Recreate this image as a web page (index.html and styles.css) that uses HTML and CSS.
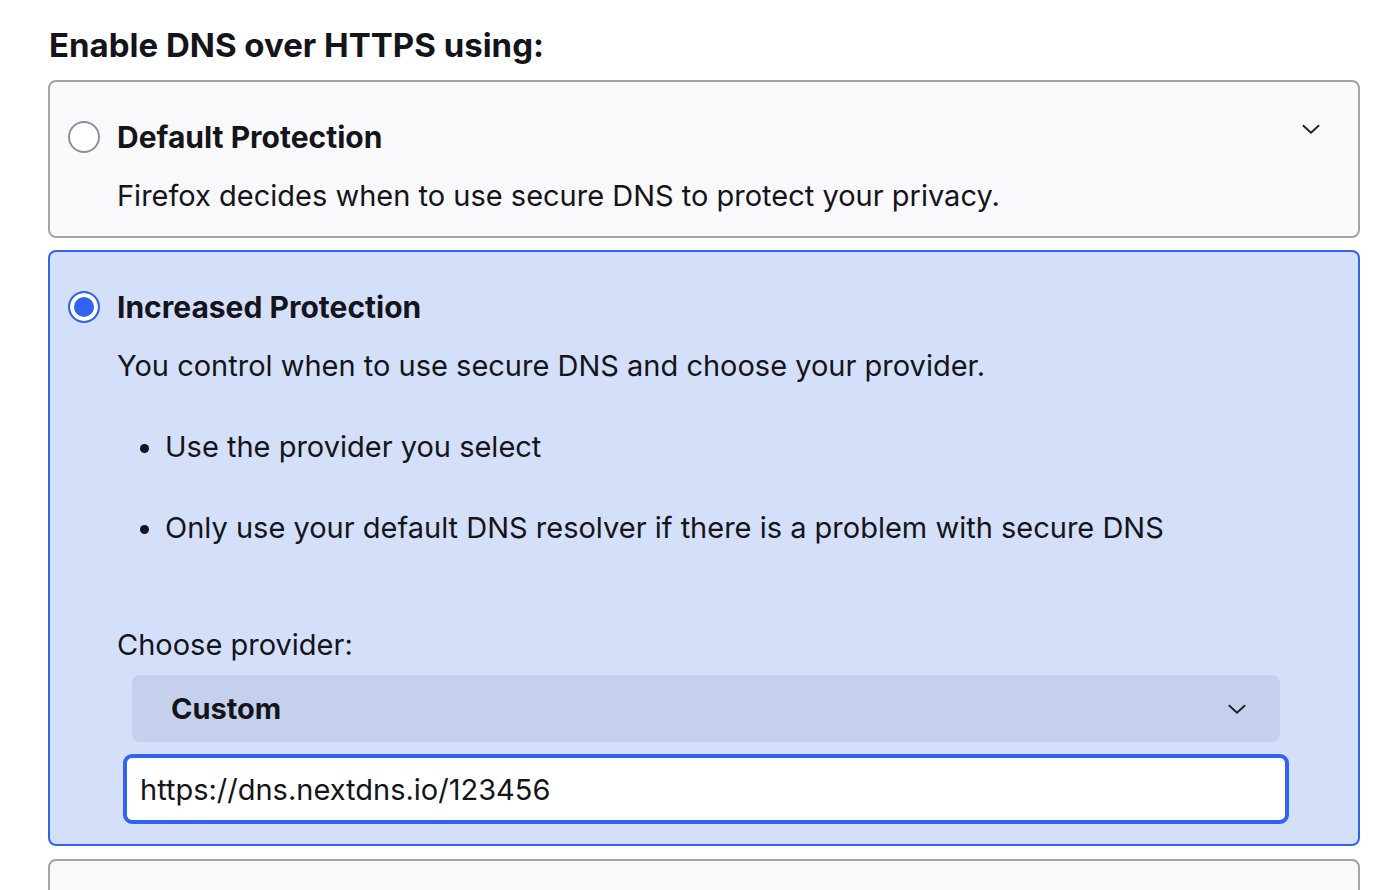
FILE: index.html
```html
<!DOCTYPE html>
<html>

<head>
    <title>DNS over HTTPS</title>
    <link rel="stylesheet" href="styles.css">
</head>

<body>
    <div class="page">
        <h2 class="heading">Enable DNS over HTTPS using:</h2>

        <div class="option">
            <div class="option-head">
                <span class="radio"></span>
                <span class="option-title">Default Protection</span>
                <svg class="chevron" viewBox="0 0 16 16">
                    <path d="M1.5 5 L8 11 L14.5 5" />
                </svg>
            </div>
            <p class="option-desc">Firefox decides when to use secure DNS to protect your privacy.</p>
        </div>

        <div class="option selected">
            <div class="option-head">
                <span class="radio checked"></span>
                <span class="option-title">Increased Protection</span>
            </div>
            <p class="option-desc">You control when to use secure DNS and choose your provider.</p>
            <ul class="points">
                <li>Use the provider you select</li>
                <li>Only use your default DNS resolver if there is a problem with secure DNS</li>
            </ul>
            <div class="provider-label">Choose provider:</div>
            <div class="select">
                <span>Custom</span>
                <svg class="chevron" viewBox="0 0 16 16">
                    <path d="M1.5 5 L8 11 L14.5 5" />
                </svg>
            </div>
            <div class="url-input">https://dns.nextdns.io/123456</div>
        </div>

        <div class="option last"></div>
    </div>
</body>

</html>
```

FILE: styles.css
```css
html,
body {
    margin: 0;
    padding: 0;
    background: #ffffff;
    overflow: hidden;
}

body {
    font-family: Inter, "Noto Sans", sans-serif;
    color: #15141a;
    font-size: 29px;
}

.page {
    width: 1312px;
    padding-left: 48px;
}

.heading {
    margin: 25px 0 15px 1px;
    font-size: 33px;
    line-height: 40px;
    font-weight: 700;
}

.option {
    border: 2px solid #a4a4a8;
    border-radius: 8px;
    background: #f9f9fb;
    padding: 35px 18px 20px 18px;
    margin-bottom: 12px;
}

.option.selected {
    border-color: #2f63f0;
    background: #d4dffa;
}

.option.last {
    margin-top: 13px;
    height: 80px;
}

.option-head {
    display: flex;
    align-items: center;
    height: 40px;
}

.radio {
    width: 28px;
    height: 28px;
    border: 2px solid #8f8f9d;
    border-radius: 50%;
    background: #ffffff;
    flex-shrink: 0;
}

.radio.checked {
    border-color: #2f63f0;
    background: #2f63f0;
    box-shadow: inset 0 0 0 4px #ffffff;
}

.option-title {
    margin-left: 17px;
    font-size: 30px;
    font-weight: 700;
    line-height: 40px;
}

.option-head .chevron {
    margin-left: auto;
    margin-right: 19px;
    margin-top: -16px;
}

.chevron {
    width: 20px;
    height: 20px;
    fill: none;
    stroke: #1c1b22;
    stroke-width: 1.4;
}

.option-desc {
    margin: 19px 0 0 49px;
    line-height: 40px;
}

.points {
    margin: 41px 0 0 49px;
    padding-left: 48px;
    line-height: 40px;
}

.points li + li {
    margin-top: 41px;
}

.provider-label {
    margin: 77px 0 0 49px;
    line-height: 40px;
}

.select {
    margin: 10px 60px 0 64px;
    height: 67px;
    border-radius: 8px;
    background: #c5d1ec;
    display: flex;
    align-items: center;
    padding: 0 33px 0 39px;
    font-weight: 700;
}

.select .chevron {
    margin-left: auto;
}

.url-input {
    margin: 12px 51px 0 55px;
    height: 62px;
    border: 4px solid #2f63f0;
    border-radius: 9px;
    background: #ffffff;
    padding: 0 13px;
    display: flex;
    align-items: center;
}
```
